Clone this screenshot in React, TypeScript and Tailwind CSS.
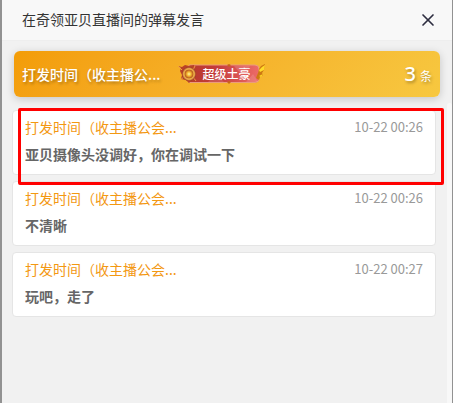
import { X } from 'lucide-react'

const messages = [
  { id: 1, name: '打发时间（收主播公会...', time: '10-22 00:26', text: '亚贝摄像头没调好，你在调试一下', marked: true },
  { id: 2, name: '打发时间（收主播公会...', time: '10-22 00:26', text: '不清晰', marked: false },
  { id: 3, name: '打发时间（收主播公会...', time: '10-22 00:27', text: '玩吧，走了', marked: false },
]

function Badge() {
  return (
    <span className="relative flex h-5 w-22 shrink-0 items-center">
      <svg className="absolute inset-0 h-5 w-22" viewBox="0 0 88 20" fill="none" aria-hidden="true">
        <defs>
          <linearGradient id="ribbon" x1="0" x2="1">
            <stop offset="0" stopColor="#b83a2b" />
            <stop offset="0.4" stopColor="#c43c3c" />
            <stop offset="1" stopColor="#ed6b68" />
          </linearGradient>
          <radialGradient id="gem">
            <stop offset="0" stopColor="#fff3a0" />
            <stop offset="0.3" stopColor="#f3b62f" />
            <stop offset="0.6" stopColor="#b5541d" />
            <stop offset="0.8" stopColor="#df9b45" />
            <stop offset="1" stopColor="#9e3528" />
          </radialGradient>
        </defs>
        <path d="M12 1H78a4 4 0 0 1 4 4v9.500a4 4 0 0 1-4 4H12Z" fill="url(#ribbon)" stroke="#eb9c7c" />
        <path d="m31 18 8-8 8 8ZM57 2l8 9 8-9ZM69 18l7-8 5 8Z" fill="#fff" opacity=".13" />
        <path d="m1 2 4 1 3-2 4 1 5-1v4l3 4-2 4 1 3-5 1-2 2-3-3-5-1 1-4-2-4 1-3Z" fill="#b84227" />
        <path d="m1 2 4 4M3 16l4-3M18 2l-2 4M19 17l-3-4" stroke="#ed9e45" />
        <circle cx="12" cy="10" r="7" fill="url(#gem)" />
        <circle cx="12" cy="10" r="5" stroke="#f1b84b" />
        <path d="m82 5 2-3 4-2-1 6-2 3 1 2-3 2-1 3-3-2 2-5Z" fill="#cd7812" />
        <path d="m82 6 3-3 3-2-1 5-4 2ZM82 12l4-2-2 3Z" fill="#ffda29" />
        <path d="m52 0 2 1-2 2-2-2ZM52 17l2 1-2 2-2-2Z" fill="#c76518" />
      </svg>
      <span className="relative pl-6.5 text-xs leading-5 font-medium text-shadow-none">超级土豪</span>
    </span>
  )
}

function App() {
  return (
    <div className="min-h-screen bg-[#929292] pr-px pl-0.5 font-['Noto_Sans_CJK_SC',sans-serif] text-sm">
      <main className="flex min-h-screen flex-col bg-[#f1f1f1]">
        <header className="flex h-[41px] items-center justify-between border-b border-[#eeeeee] bg-[#f8f8f8] pr-3.5 pb-0.5 pl-5">
          <h1 className="leading-5 text-[#333333]">在奇领亚贝直播间的弹幕发言</h1>
          <button type="button" aria-label="关闭" className="pt-0.5 text-[#2d2d40]">
            <X size={20} strokeWidth={2} />
          </button>
        </header>

        <section className="mx-3 mt-2.5 flex h-[46px] items-center rounded-md bg-linear-135 from-[#f39c06] to-[#f7c840] px-2 text-white shadow-[0_2px_8px_rgba(0,0,0,0.18)] text-shadow-[1px_2px_3px_rgba(0,0,0,0.3)]">
          <span className="mr-4 font-medium">打发时间（收主播公...</span>
          <Badge />
          <span className="ml-auto flex items-baseline gap-1">
            <strong className="font-['Noto_Sans',sans-serif] text-xl font-medium">3</strong>
            <span className="text-xs">条</span>
          </span>
        </section>

        <div className="mt-1.5 flex flex-1">
          <ul className="flex min-w-0 flex-1 flex-col gap-1.5 pt-[7px] pr-[11px] pl-2.5">
            {messages.map((message) => (
              <li key={message.id} className="relative rounded border border-[#e5e5e5] bg-white px-3 pt-1.5 pb-2.5">
                <div className="flex items-center justify-between">
                  <span className="leading-5 text-[#f39812]">{message.name}</span>
                  <time className="text-[13px] leading-5 text-[#999999]">{message.time}</time>
                </div>
                <p className="mt-[7px] leading-5 font-bold text-[#666666]">{message.text}</p>
                {message.marked && (
                  <div className="pointer-events-none absolute -top-[3px] -right-[9px] -bottom-[11px] left-[5px] z-10 rounded-xs border-3 border-[#ff0000]" />
                )}
              </li>
            ))}
          </ul>
          <div className="w-[5px] rounded-t bg-[#f8f8f8]" />
        </div>
      </main>
    </div>
  )
}

export default App
